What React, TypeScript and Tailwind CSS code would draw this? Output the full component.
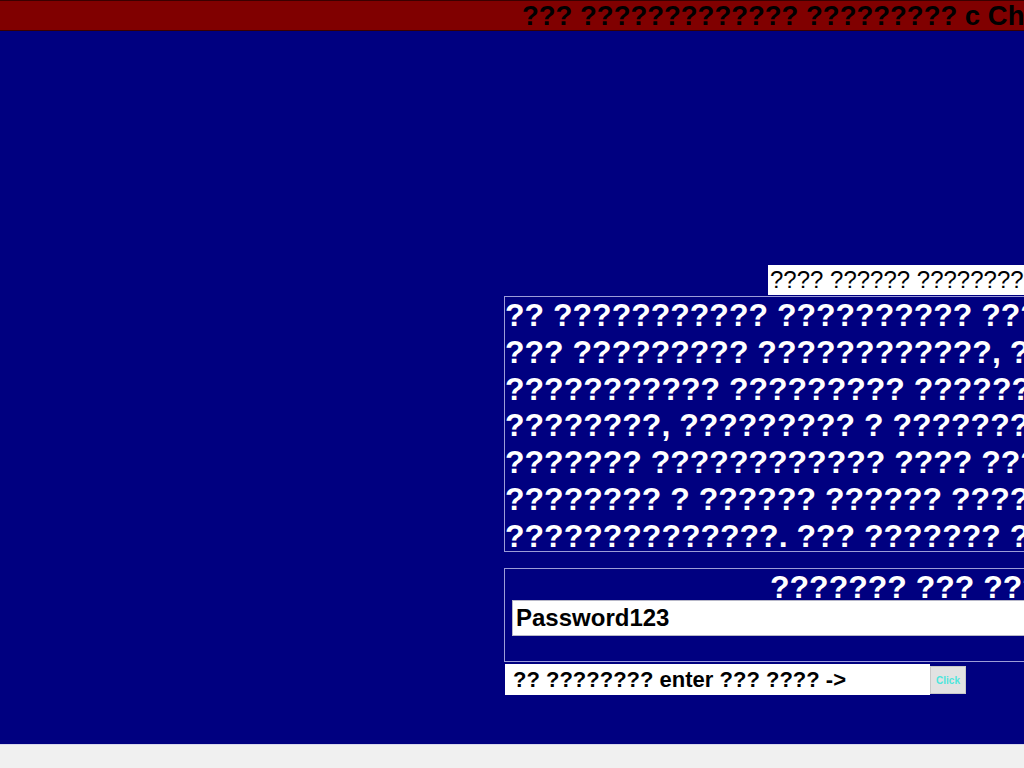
import React from 'react';

const lines = [
  '?? ??????????? ?????????? ???',
  '??? ????????? ????????????, ???',
  '??????????? ????????? ?????????',
  '????????, ????????? ? ?????????',
  '??????? ???????????? ???? ?????',
  '???????? ? ?????? ?????? ???????',
  '??????????????. ??? ??????? ????',
];

const App: React.FC = () => {
  return (
    <div className="flex h-screen w-full flex-col overflow-hidden font-['Liberation_Sans',Arial,sans-serif]">
      {/* Title bar */}
      <div className="flex h-[31px] shrink-0 items-center whitespace-nowrap border-y border-[#3a0000] bg-[#800000] pl-[522px] text-[27.5px] font-bold leading-none text-black">
        ??? ????????????? ????????? c Ch
      </div>

      {/* Main area */}
      <div className="flex-1 bg-[#000080] pl-[504px] pt-[234px]">
        <div className="flex w-[900px] flex-col">
          <div className="ml-[264px] h-[30px] whitespace-nowrap bg-white pl-[2px] text-[24px] leading-[30px] text-black">
            ???? ?????? ????????
          </div>

          <div className="mt-px h-[256px] border border-[#9c9cd8] text-[32px] font-bold leading-[36.8px] text-white">
            {lines.map((line) => (
              <div key={line} className="whitespace-nowrap">
                {line}
              </div>
            ))}
          </div>

          <div className="mt-[16px] h-[94px] border border-[#9c9cd8] pl-[7px] pt-[2px]">
            <div className="h-[29px] whitespace-nowrap pl-[258px] text-[32px] font-bold leading-[32px] text-white">
              ??????? ??? ???
            </div>
            <input
              readOnly
              defaultValue="Password123"
              className="relative block h-[36px] w-full border border-[#b8b8c8] bg-white pl-[3px] text-[24px] font-bold text-black outline-none"
            />
          </div>

          <div className="mt-[2px] flex items-start">
            <input
              readOnly
              defaultValue="?? ???????? enter ??? ???? ->"
              className="ml-px block h-[31px] w-[425px] bg-white pl-[8px] text-[22px] font-bold text-black outline-none"
            />
            <button className="mt-[2px] flex h-[28px] w-[36px] items-center justify-center border border-[#c8c8c8] bg-[#e2e2e2] text-[10px] font-bold text-[#4de6dc]">
              Click
            </button>
          </div>
        </div>
      </div>

      {/* Bottom scrollbar strip */}
      <div className="h-[24px] shrink-0 border-t border-[#d8d8ec] bg-[#f0f0f0]" />
    </div>
  );
};

export default App;
